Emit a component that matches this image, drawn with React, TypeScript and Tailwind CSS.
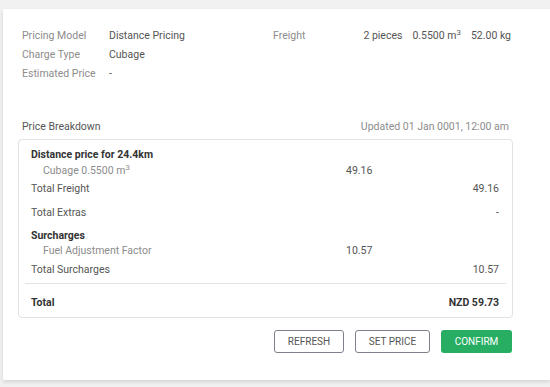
import React from 'react';

const font = { fontFamily: 'Roboto, "Liberation Sans", sans-serif' };

function Row({ label, value, bold }: { label: string; value: string; bold?: boolean }) {
  return (
    <div className={`flex justify-between leading-[15px] ${bold ? 'font-bold text-[#333]' : 'text-[#555]'}`}>
      <span>{label}</span>
      <span>{value}</span>
    </div>
  );
}

function SubRow({ label, value }: { label: React.ReactNode; value: string }) {
  return (
    <div className="flex leading-[15px]">
      <span className="w-[315px] pl-3 text-[#8c8c8c]">{label}</span>
      <span className="text-[#555]">{value}</span>
    </div>
  );
}

export default function App() {
  return (
    <div className="w-[550px] h-[387px] bg-[#f1f1f1] overflow-hidden text-[10.5px]" style={font}>
      <div className="ml-[3px] mt-[9px] w-[547px] h-[371px] bg-white shadow-[0_2px_4px_rgba(0,0,0,0.12)] pl-[19px] pr-[39px] pt-[19px]">
        {/* Summary */}
        <div className="flex">
          <div className="w-[251px] flex flex-col gap-[4px] leading-[15px]">
            <div className="flex">
              <span className="w-[87px] text-[#8c8c8c]">Pricing Model</span>
              <span className="text-[#555]">Distance Pricing</span>
            </div>
            <div className="flex">
              <span className="w-[87px] text-[#8c8c8c]">Charge Type</span>
              <span className="text-[#555]">Cubage</span>
            </div>
            <div className="flex">
              <span className="w-[87px] text-[#8c8c8c]">Estimated Price</span>
              <span className="text-[#555]">-</span>
            </div>
          </div>
          <div className="flex-1 flex justify-between leading-[15px]">
            <span className="text-[#8c8c8c]">Freight</span>
            <div className="flex gap-[10px] text-[#555]">
              <span>2 pieces</span>
              <span>0.5500 m<sup>3</sup></span>
              <span>52.00 kg</span>
            </div>
          </div>
        </div>

        {/* Breakdown header */}
        <div className="mt-[38px] flex justify-between leading-[15px]">
          <span className="text-[#555]">Price Breakdown</span>
          <span className="mr-[2px] text-[#8c8c8c]">Updated 01 Jan 0001, 12:00 am</span>
        </div>

        <div className="mt-[5px] -ml-[4px] -mr-[2px] border border-[#e2e2e2] rounded-[4px] pl-3 pr-[13px] pt-[7px] pb-[7px]">
          <div className="font-bold text-[#333] leading-[15px]">Distance price for 24.4km</div>
          <div className="mt-px">
            <SubRow label={<>Cubage 0.5500 m<sup>3</sup></>} value="49.16" />
          </div>
          <div className="mt-[3px]">
            <Row label="Total Freight" value="49.16" />
          </div>
          <div className="mt-[9px]">
            <Row label="Total Extras" value="-" />
          </div>
          <div className="mt-[8px] font-bold text-[#333] leading-[15px]">Surcharges</div>
          <SubRow label="Fuel Adjustment Factor" value="10.57" />
          <div className="mt-[4px]">
            <Row label="Total Surcharges" value="10.57" />
          </div>
          <div className="mt-[6px] -ml-[6px] -mr-[7px] border-t border-[#e2e2e2]" />
          <div className="mt-[11px]">
            <Row label="Total" value="NZD 59.73" bold />
          </div>
        </div>

        {/* Actions */}
        <div className="mt-[12px] -mr-px flex justify-end gap-[11px] text-[10px]">
          <button className="w-[70px] h-[23px] border border-[#80808c] rounded-[3px] text-[#555] uppercase">Refresh</button>
          <button className="w-[75px] h-[23px] border border-[#80808c] rounded-[3px] text-[#555] uppercase">Set Price</button>
          <button className="w-[71px] h-[23px] bg-[#27ae63] rounded-[3px] text-white uppercase">Confirm</button>
        </div>
      </div>
    </div>
  );
}
